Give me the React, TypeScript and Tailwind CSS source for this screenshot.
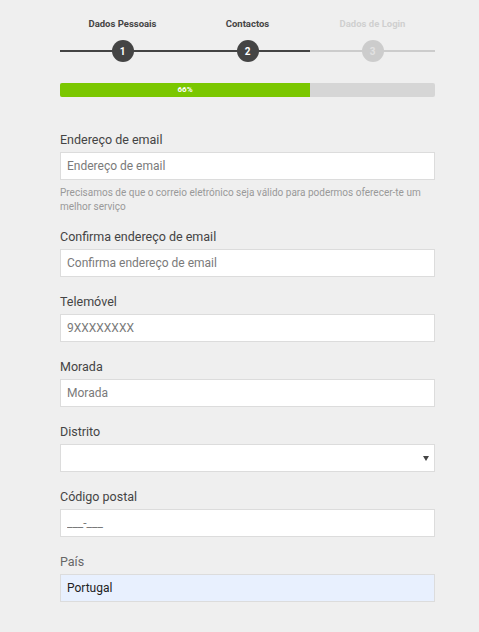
import React from 'react';

const steps = [
  { n: 1, label: 'Dados Pessoais', done: true },
  { n: 2, label: 'Contactos', done: true },
  { n: 3, label: 'Dados de Login', done: false },
];

const inputCls =
  'block w-full h-[28px] border border-[#dcdcdc] bg-white px-[6px] text-[12px] text-[#333] placeholder:text-[#7a7a7a] outline-none';

const Field = ({ label, children }: { label: string; children: React.ReactNode }) => (
  <div className="mb-[16px]">
    <label className="block text-[12.5px] leading-[18px] text-[#444] mb-[3px]">{label}</label>
    {children}
  </div>
);

export default function App() {
  return (
    <div className="min-h-[632px] bg-[#efefef] pl-[60px] pr-[44px] pt-[18px] font-['Roboto',sans-serif]">
      <div className="grid grid-cols-3">
        {steps.map((s) => (
          <div key={s.n} className="flex flex-col items-center">
            <div
              className={
                'text-[9.5px] leading-[12px] font-bold ' + (s.done ? 'text-[#444]' : 'text-[#cfcfcf]')
              }
            >
              {s.label}
            </div>
            <div className="relative w-full h-[22px] mt-[10px] flex items-center justify-center">
              <div
                className={
                  'absolute left-0 right-0 top-[10px] h-[2px] ' + (s.done ? 'bg-[#444]' : 'bg-[#cccccc]')
                }
              />
              <div
                className={
                  'relative w-[22px] h-[22px] rounded-full flex items-center justify-center text-[10px] font-bold ' +
                  (s.done ? 'bg-[#444] text-white' : 'bg-[#cccccc] text-[#e2e2e2]')
                }
              >
                {s.n}
              </div>
            </div>
          </div>
        ))}
      </div>

      <div className="mt-[21px] h-[14px] rounded-[2px] bg-[#d6d6d6] overflow-hidden flex">
        <div className="w-2/3 bg-[#7ac700] flex items-center justify-center text-[8px] font-bold text-white">
          66%
        </div>
      </div>

      <div className="mt-[34px]">
        <div className="mb-[14px]">
          <label className="block text-[12.5px] leading-[18px] text-[#444] mb-[3px]">Endereço de email</label>
          <input className={inputCls} placeholder="Endereço de email" />
          <p className="mt-[6px] text-[10px] leading-[14px] text-[#999]">
            Precisamos de que o correio eletrónico seja válido para podermos oferecer-te um melhor serviço
          </p>
        </div>

        <Field label="Confirma endereço de email">
          <input className={inputCls} placeholder="Confirma endereço de email" />
        </Field>

        <Field label="Telemóvel">
          <input className={inputCls} placeholder="9XXXXXXXX" />
        </Field>

        <Field label="Morada">
          <input className={inputCls} placeholder="Morada" />
        </Field>

        <Field label="Distrito">
          <div className="relative">
            <div className={inputCls} />
            <svg className="absolute right-[6px] top-[12px]" width="6" height="5" viewBox="0 0 6 5">
              <path d="M0 0h6L3 5z" fill="#444" />
            </svg>
          </div>
        </Field>

        <Field label="Código postal">
          <input className={inputCls} placeholder="___-___" />
        </Field>

        <div>
          <label className="block text-[12.5px] leading-[18px] text-[#666] mb-[3px]">País</label>
          <input className={inputCls + ' !bg-[#e8f0fe] !text-[#222]'} defaultValue="Portugal" />
        </div>
      </div>
    </div>
  );
}
